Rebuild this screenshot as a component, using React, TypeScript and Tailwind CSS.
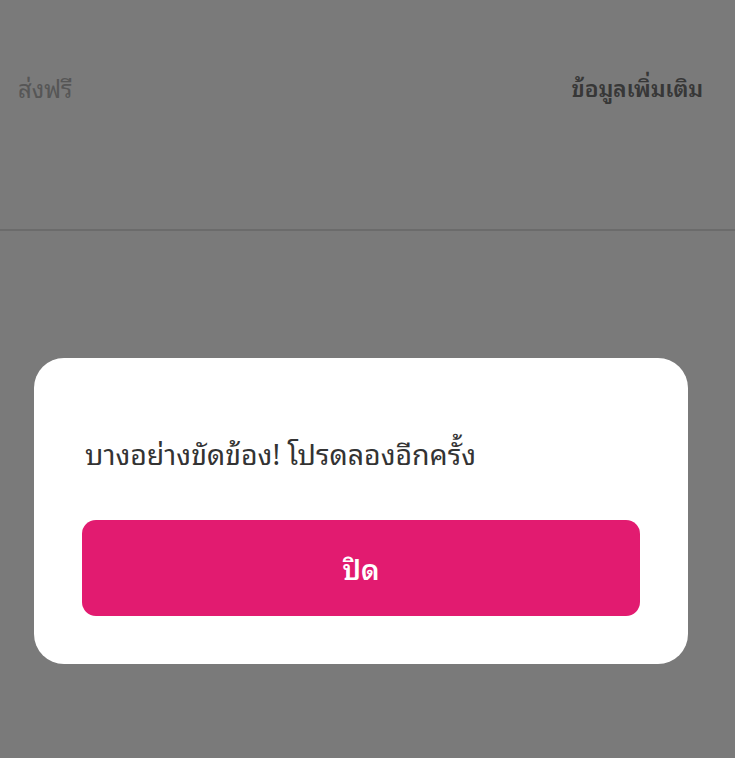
import React from 'react'

const font = {
  fontFamily:
    '"Noto Sans Thai Looped", "Loma", "Garuda", "Noto Sans", "Noto Sans Thai", "Liberation Sans", sans-serif'
}

export default function App() {
  return (
    <div className="relative h-[758px] w-full overflow-hidden bg-white" style={font}>
      {/* page underneath */}
      <div className="flex h-[231px] items-start justify-between border-b-2 border-[#e0e0e0] px-[18px] pt-[69px]">
        <p className="text-[24px] leading-[36px] text-[#b4b4b4]">ส่งฟรี</p>
        <p className="pr-[14px] text-[23px] font-semibold leading-[36px] tracking-[-0.2px] text-[#747474]">
          ข้อมูลเพิ่มเติม
        </p>
      </div>

      {/* overlay */}
      <div className="absolute inset-0 flex justify-center bg-black/[0.52] pl-[34px] pr-[47px] pt-[358px]">
        <div className="flex h-[306px] w-full flex-col rounded-[30px] bg-white px-[48px] pt-[73px]">
          <p className="pl-[3px] text-[28.5px] leading-[42px] text-[#333333]">
            บางอย่างขัดข้อง! โปรดลองอีกครั้ง
          </p>
          <button className="mt-[47px] flex h-[96px] w-full items-center justify-center rounded-[14px] bg-[#e21b70] text-[28px] font-semibold text-white">
            ปิด
          </button>
        </div>
      </div>
    </div>
  )
}
